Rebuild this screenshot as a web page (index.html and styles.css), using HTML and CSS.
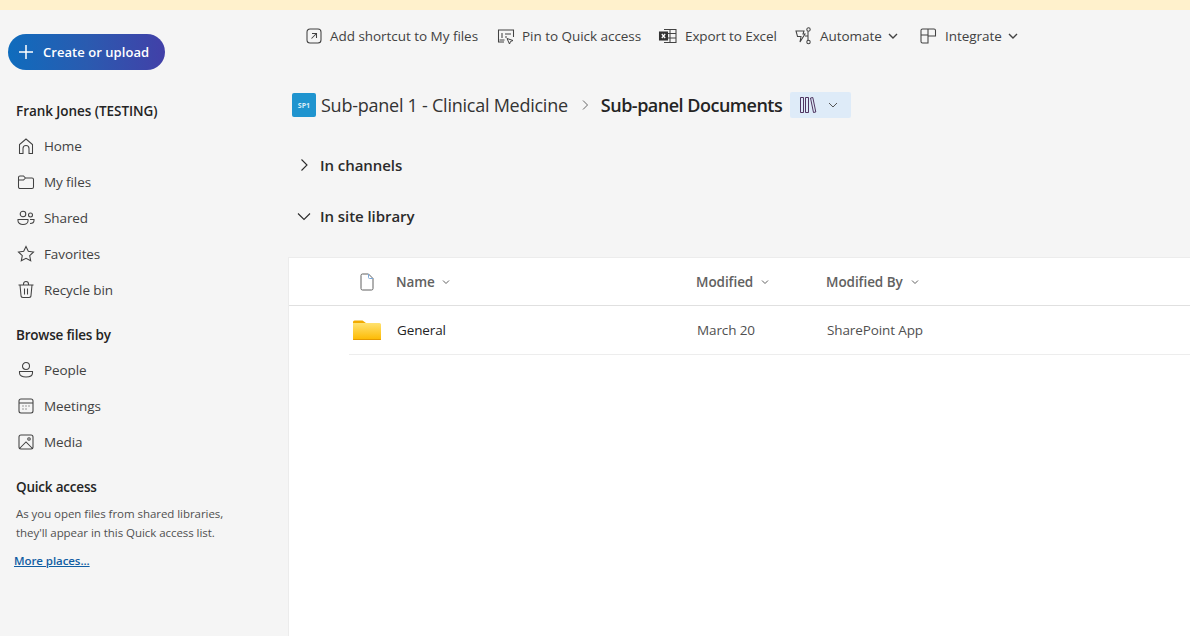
FILE: index.html
```html
<!DOCTYPE html>
<html lang="en">
<head>
<meta charset="utf-8">
<title>Sub-panel Documents</title>
<link rel="stylesheet" href="styles.css">
</head>
<body>
<div class="banner"></div>
<div class="app">
  <aside class="side">
    <button class="create"><svg class="plus" viewBox="0 0 14 14"><path d="M7 0v14M0 7h14"/></svg><span>Create or upload</span></button>
    <h2 class="side-title user">Frank Jones (TESTING)</h2>
    <nav class="nav">
      <a class="nav-item"><svg class="ico" viewBox="0 0 20 20"><path d="M3.500 17.500V8.500L10 3l6.500 5.500v9h-3.500v-5a3 3 0 0 0-6 0v5z"/></svg>Home</a>
      <a class="nav-item"><svg class="ico" viewBox="0 0 20 20"><path d="M2.500 15V5.500a1.500 1.500 0 0 1 1.500-1.500h3.500l2 2h6.500a1.500 1.500 0 0 1 1.500 1.500V15a1.500 1.500 0 0 1-1.500 1.500H4A1.500 1.500 0 0 1 2.500 15zM2.500 8h5l2-2"/></svg>My files</a>
      <a class="nav-item"><svg class="ico" viewBox="0 0 20 20"><circle cx="7" cy="6" r="2.800"/><circle cx="14.500" cy="7" r="2"/><path d="M2 11.500h10v1.500c0 2-2.200 3.500-5 3.500s-5-1.500-5-3.500zM14 11.500h4v1c0 1.800-1.500 3-4 3"/></svg>Shared</a>
      <a class="nav-item"><svg class="ico" viewBox="0 0 20 20"><path d="M10 2.500l2.300 4.800 5.200.7-3.800 3.600 1 5.200-4.700-2.500-4.700 2.500 1-5.200L2.500 8l5.200-.7z"/></svg>Favorites</a>
      <a class="nav-item"><svg class="ico" viewBox="0 0 20 20"><path d="M2.500 5h15M7.500 5V4a2.500 2.500 0 0 1 5 0v1M4 5l1 10.500a2 2 0 0 0 2 2h6a2 2 0 0 0 2-2L16 5M8.500 8.500v6M11.500 8.500v6"/></svg>Recycle bin</a>
    </nav>
    <h2 class="side-title browse">Browse files by</h2>
    <nav class="nav">
      <a class="nav-item"><svg class="ico" viewBox="0 0 20 20"><circle cx="10" cy="6" r="3.500"/><path d="M3.500 11.500h13V13c0 2.500-2.800 4-6.500 4s-6.500-1.500-6.500-4z"/></svg>People</a>
      <a class="nav-item"><svg class="ico" viewBox="0 0 20 20"><rect x="3" y="3" width="14" height="14" rx="2"/><path d="M3 7h14M6.500 10h1M9.500 10h1M12.500 10h1M6.500 13h1M9.500 13h1"/></svg>Meetings</a>
      <a class="nav-item"><svg class="ico" viewBox="0 0 20 20"><rect x="3" y="3" width="14" height="14" rx="2"/><circle cx="13" cy="7" r="1.300"/><path d="M3.500 16.500L10 10l6.500 6.500"/></svg>Media</a>
    </nav>
    <h2 class="side-title quick">Quick access</h2>
    <p class="quick-text">As you open files from shared libraries,<br>they'll appear in this Quick access list.</p>
    <a class="more">More places...</a>
  </aside>
  <main class="main">
    <div class="toolbar">
      <span class="tool t1"><svg class="ico" viewBox="0 0 20 20"><rect x="3" y="3" width="14" height="14" rx="3"/><path d="M7.500 12.500l5-5M8 7.500h4.500V12"/></svg>Add shortcut to My files</span>
      <span class="tool t2"><svg class="ico wide" viewBox="0 0 20 20"><path d="M8 16H2.500V4h15v7M6 7v5M3.500 14h5M9 8h6M9 11h2"/><path class="accent" d="M11 12.500l6 2-2.500 1-1 2.500z"/></svg>Pin to Quick access</span>
      <span class="tool t3"><svg class="ico wide" viewBox="0 0 20 20"><path d="M6 3.500h12v13H6M6 7.500h12M6 12h12M12 3.500v13"/><rect class="xl" x="1.500" y="6" width="8" height="8"/><path class="xl-x" d="M3.800 8l3.400 4M7.200 8l-3.400 4"/></svg>Export to Excel</span>
      <span class="tool t4"><svg class="ico wide" viewBox="0 0 20 20"><path d="M3 5h8l-1 3h2l-5 8 1-5.500H4.500zM15 5.500v9M12 10h3"/><circle cx="15.500" cy="3.500" r="1.700"/><circle cx="15.500" cy="16" r="1.700"/></svg>Automate<svg class="caret" viewBox="0 0 12 12"><path d="M2 4l4 4 4-4"/></svg></span>
      <span class="tool t5"><svg class="ico wide" viewBox="0 0 20 20"><path d="M3 9h7v8H4.500A1.500 1.500 0 0 1 3 15.500zM3 9V4.500A1.500 1.500 0 0 1 4.500 3H10v14M10 3h6a1.500 1.500 0 0 1 1.500 1.500V10H10"/></svg>Integrate<svg class="caret" viewBox="0 0 12 12"><path d="M2 4l4 4 4-4"/></svg></span>
    </div>
    <div class="crumbs">
      <span class="site-logo">SP1</span>
      <span class="crumb">Sub-panel 1 - Clinical Medicine</span>
      <svg class="crumb-sep" viewBox="0 0 10 12"><path d="M3 1.500L7.500 6 3 10.500"/></svg>
      <strong class="crumb-current">Sub-panel Documents</strong>
      <span class="lib-btn"><svg class="lib" viewBox="0 0 18 18"><path d="M1.500 1.500h3v15h-3zM6.500 1.500h3v15h-3zM11.500 2l2.300-.5 3 14.500-2.300.5z"/></svg><svg class="lib-caret" viewBox="0 0 12 12"><path d="M2 4l4 4 4-4"/></svg></span>
    </div>
    <div class="section channels"><svg class="sec-caret" viewBox="0 0 14 14"><path d="M4.500 1.500L10 7l-5.500 5.500"/></svg>In channels</div>
    <div class="section library"><svg class="sec-caret" viewBox="0 0 14 14"><path d="M1 4.500L7 10.500l6-6"/></svg>In site library</div>
    <section class="panel">
      <div class="row head">
        <span class="c-icon"><svg class="file" viewBox="0 0 16 18"><path d="M2 2.500a1.500 1.500 0 0 1 1.500-1.500h6l4.500 4.500v10a1.500 1.500 0 0 1-1.500 1.500h-9a1.500 1.500 0 0 1-1.500-1.500z"/><path class="file-fold" d="M9.500 1v3.500a1 1 0 0 0 1 1H14"/></svg></span>
        <span class="c-name">Name<svg class="sort" viewBox="0 0 10 10"><path d="M2 3.500l3 3 3-3"/></svg></span>
        <span class="c-mod">Modified<svg class="sort sort-far" viewBox="0 0 10 10"><path d="M2 3.500l3 3 3-3"/></svg></span>
        <span class="c-by">Modified By<svg class="sort sort-far" viewBox="0 0 10 10"><path d="M2 3.500l3 3 3-3"/></svg></span>
      </div>
      <div class="row item">
        <span class="c-icon"><svg class="folder" viewBox="0 0 28 20"><defs><linearGradient id="fg" x1="0" y1="0" x2="0" y2="1"><stop offset="0" stop-color="#ffe270"/><stop offset="1" stop-color="#fdb900"/></linearGradient></defs><path d="M0 2a1.500 1.500 0 0 1 1.500-1.500h8L13 3H0z" fill="#f2ab00"/><path d="M0 3h26.500a1.500 1.500 0 0 1 1.500 1.500V19a1 1 0 0 1-1 1H1a1 1 0 0 1-1-1z" fill="url(#fg)"/><path d="M0 19h28v.3a.7.7 0 0 1-.7.7H.7a.7.7 0 0 1-.7-.7z" fill="#e59a00"/></svg></span>
        <span class="c-name name-val">General</span>
        <span class="c-mod">March 20</span>
        <span class="c-by">SharePoint App</span>
      </div>
    </section>
  </main>
</div>
</body>
</html>
```
FILE: styles.css
```css
* { box-sizing: border-box; }
html, body { margin: 0; height: 100%; overflow: hidden; }
body {
  display: flex;
  flex-direction: column;
  height: 636px;
  background: #f5f5f5;
  color: #424242;
  font-family: "Open Sans", "Noto Sans", sans-serif;
  font-size: 13.500px;
}
svg { fill: none; stroke: currentColor; flex: none; }
.banner { height: 10px; background: #fff1cc; flex: none; }
.app { flex: 1; display: flex; min-height: 0; }

/* sidebar */
.side { width: 288px; flex: none; padding: 24px 0 0 8px; display: flex; flex-direction: column; align-items: flex-start; }
.create {
  width: 157px; height: 36px; border: 0; border-radius: 18px; padding: 0 0 0 11px;
  display: flex; align-items: center; gap: 10px;
  background: linear-gradient(90deg, #0f6cbd 0%, #2a5bb0 50%, #4240a8 100%);
  color: #fff; font: 600 13px "Open Sans", sans-serif; letter-spacing: .05px;
}
.plus { width: 14px; height: 14px; stroke-width: 1.500; }
.side-title { margin: 0; padding-left: 8px; font-size: 13.500px; font-weight: 600; color: #242424; line-height: 18px; letter-spacing: -.05px; }
.user { margin-top: 32px; }
.browse { margin-top: 18px; letter-spacing: -.2px; }
.quick { margin-top: 18px; letter-spacing: -.2px; }
.nav { display: flex; flex-direction: column; margin-top: 8px; align-self: stretch; }
.nav-item { height: 36px; display: flex; align-items: center; gap: 8px; padding-left: 8px; color: #424242; letter-spacing: -.1px; }
.ico { width: 20px; height: 20px; stroke-width: 1.050; color: #424242; }
.quick-text { margin: 8px 0 0; padding-left: 8px; font-size: 11.500px; line-height: 19px; color: #505050; letter-spacing: -.05px; }
.more { margin: 10px 0 0 6px; font-size: 11.500px; font-weight: 600; line-height: 18px; color: #115ea3; text-decoration: underline; letter-spacing: -.07px; }

/* main */
.main { flex: 1; min-width: 0; display: flex; flex-direction: column; }
.toolbar { height: 52px; display: flex; align-items: center; padding-left: 16px; flex: none; }
.tool { display: flex; align-items: center; color: #424242; letter-spacing: -.04px; }
.tool .ico { margin-right: 6px; width: 20px; height: 20px; }
.t1 { width: 192px; }
.t2 { width: 162px; }
.t3 { width: 135px; letter-spacing: -.1px; }
.t3 .ico, .t4 .ico, .t5 .ico { margin-right: 7px; }
.t4 { width: 125px; }
.accent { stroke-width: 1; }
.xl { fill: #333; stroke: #333; }
.xl-x { stroke: #fff; stroke-width: 1.200; }
.caret { width: 12px; height: 12px; margin-left: 5px; stroke-width: 1.400; }

.crumbs { height: 28px; margin-top: 29px; padding-left: 4px; display: flex; align-items: center; flex: none; }
.site-logo { width: 24px; height: 24px; border-radius: 2px; background: #1f94cf; color: #d8eef8; font-size: 7px; font-weight: 700; display: flex; align-items: center; justify-content: center; }
.crumb { margin-left: 5px; font-size: 18px; color: #333; letter-spacing: -.25px; }
.crumb-sep { width: 10px; height: 12px; margin-left: 12px; color: #666; stroke-width: 1; }
.crumb-current { margin-left: 11px; font-size: 18px; font-weight: 600; color: #242424; letter-spacing: -.5px; white-space: nowrap; }
.lib-btn { margin-left: 8px; width: 61px; height: 26px; border-radius: 2px; background: #deebf8; display: flex; align-items: center; padding-left: 9px; gap: 10px; }
.lib { width: 18px; height: 18px; color: #40204f; stroke-width: .9; }
.lib-caret { width: 12px; height: 12px; color: #555; stroke-width: 1; }

.section { display: flex; align-items: center; gap: 9px; padding-left: 9px; font-size: 15px; font-weight: 600; color: #2b2b2b; line-height: 20px; letter-spacing: -.06px; }
.channels { margin-top: 36px; }
.library { margin-top: 31px; }
.sec-caret { width: 14px; height: 14px; stroke-width: 1.100; }

.panel { margin-top: 31px; flex: 1; background: #fff; border-left: 1px solid #ececec; border-top: 1px solid #ececec; }
.row { display: flex; align-items: center; }
.head { height: 48px; border-bottom: 1px solid #e0e0e0; font-weight: 600; color: #616161; letter-spacing: -.06px; }
.item { height: 49px; margin-left: 60px; border-bottom: 1px solid #ededed; letter-spacing: -.12px; }
.c-icon { width: 47px; display: flex; padding-left: 4px; }
.head .c-icon { margin-left: 60px; padding-left: 10px; }
.c-name { width: 300px; display: flex; align-items: center; }
.name-val { color: #242424; padding-left: 1px; }
.c-mod { width: 130px; display: flex; align-items: center; }
.c-by { display: flex; align-items: center; }
.item .c-mod, .item .c-by { padding-left: 1px; color: #505050; }
.sort { width: 10px; height: 10px; margin-left: 6px; stroke-width: 1; }
.sort-far { margin-left: 7px; }
.file { width: 16px; height: 18px; stroke-width: 1; color: #616161; }
.file-fold { stroke: #7aa7d9; }
.folder { width: 28px; height: 20px; stroke: none; }
```
